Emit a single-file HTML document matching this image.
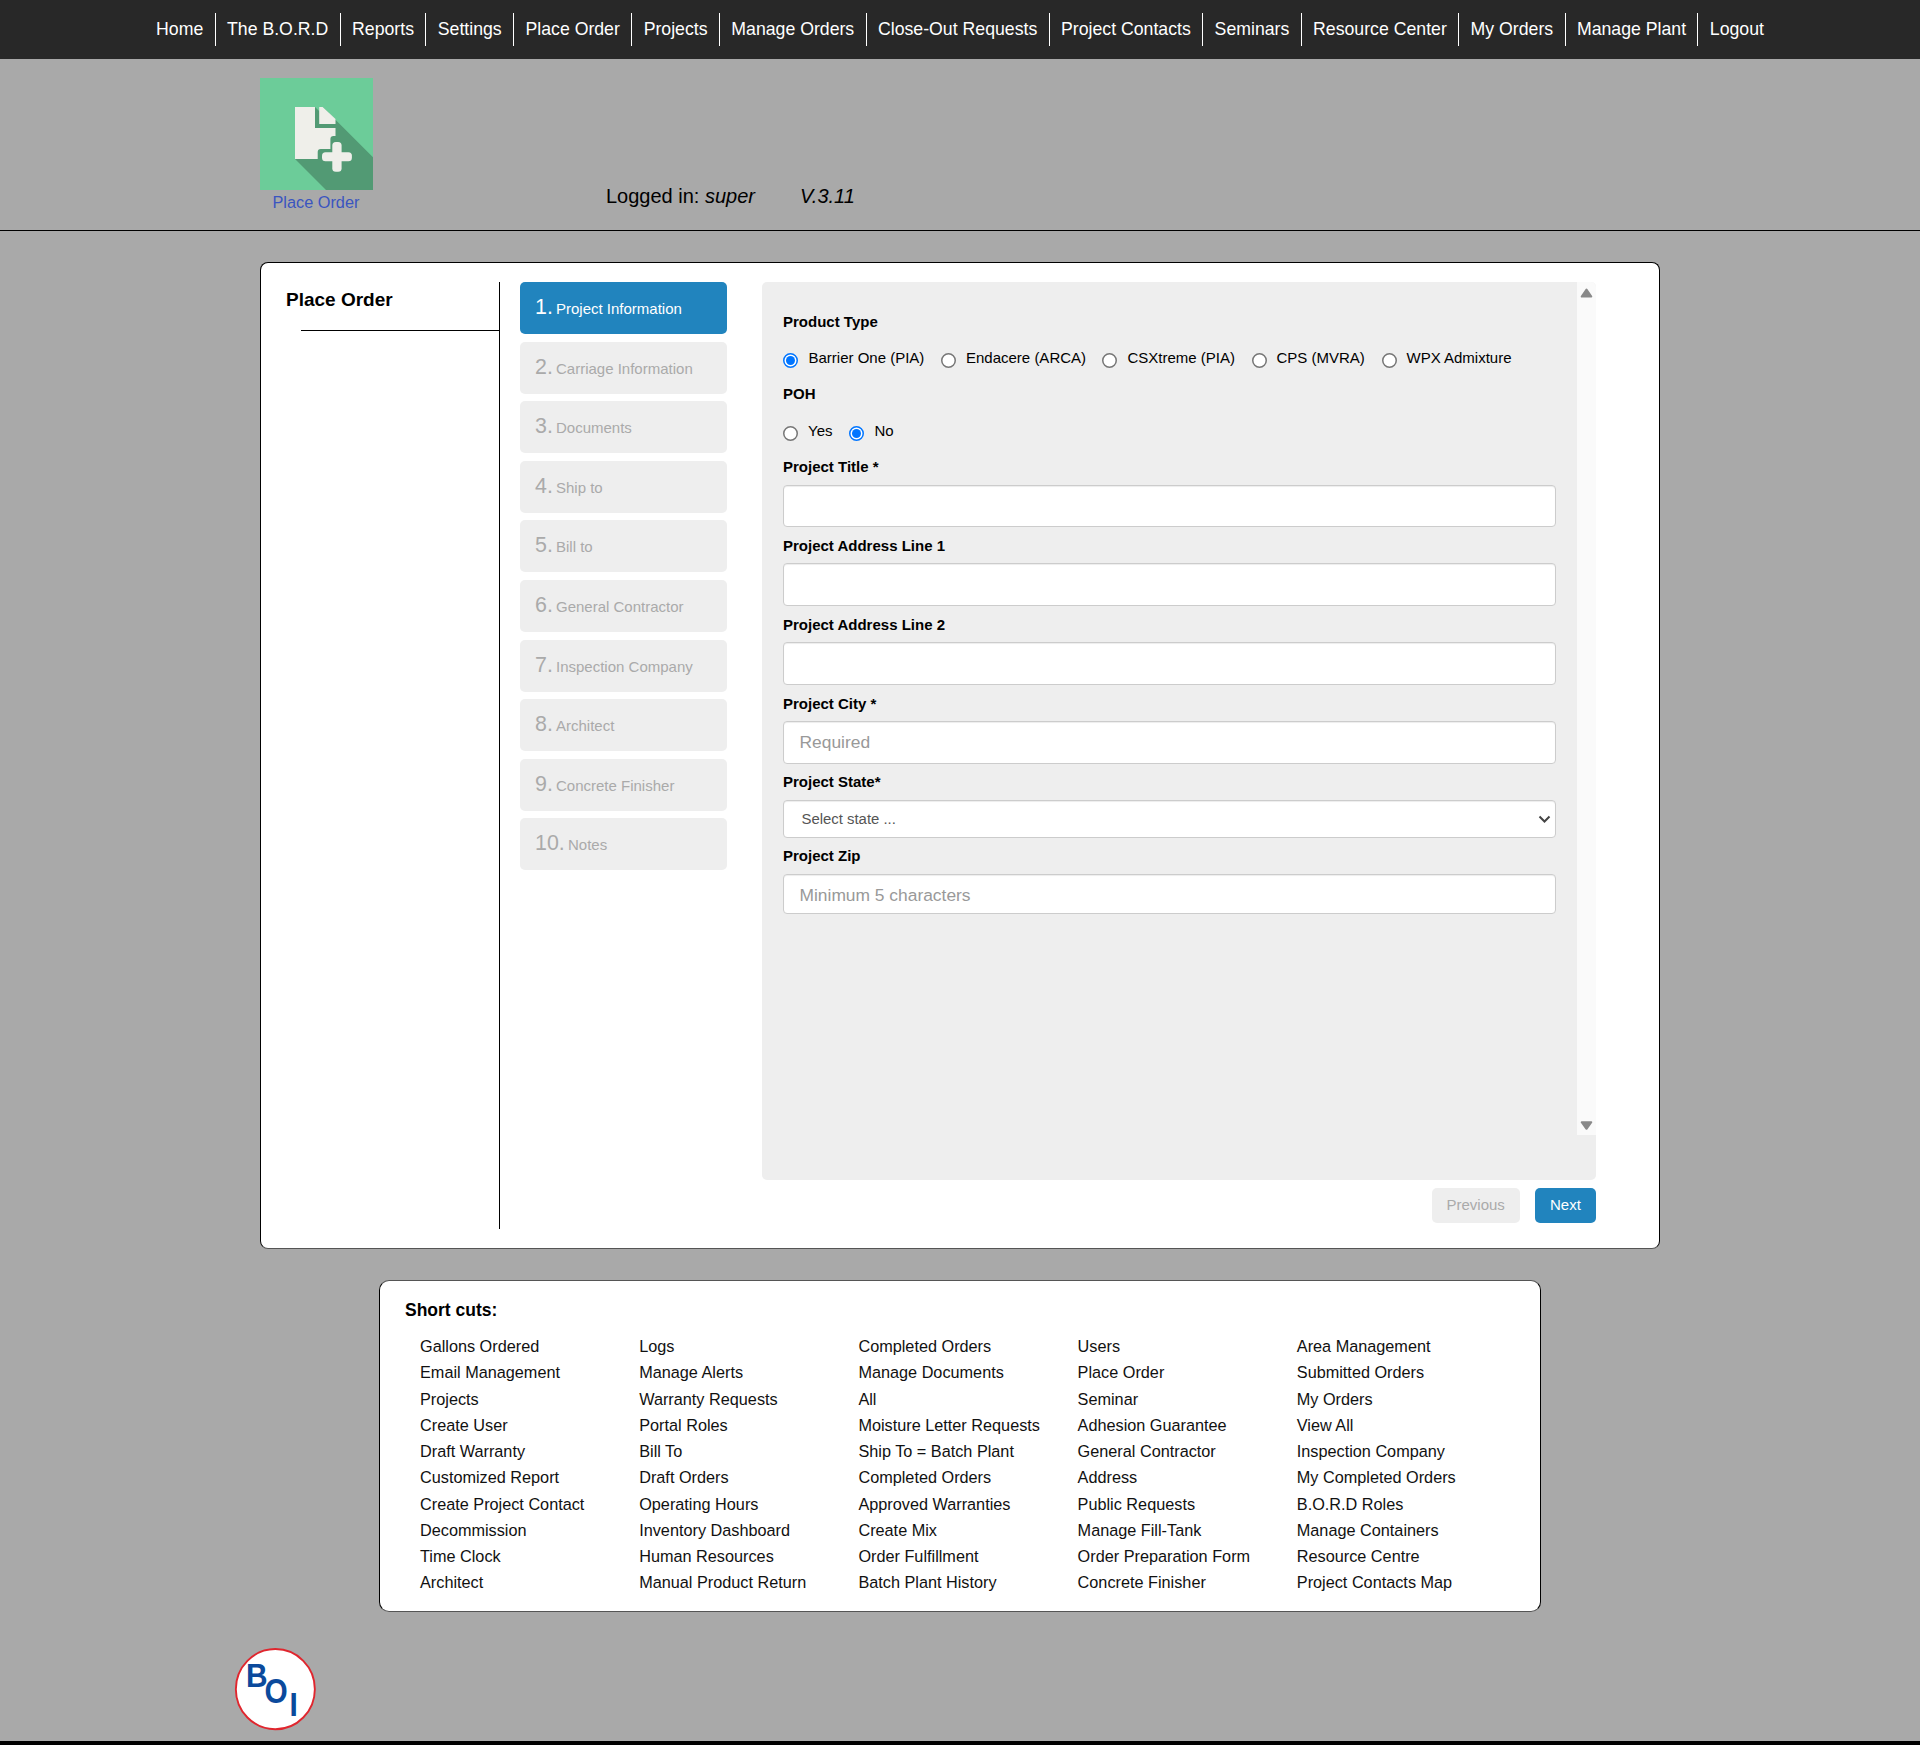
<!DOCTYPE html>
<html><head><meta charset="utf-8"><title>Place Order</title>
<style>
*{box-sizing:border-box}
html,body{margin:0;padding:0}
body{width:1920px;height:1745px;background:#a9a9a9;font-family:"Liberation Sans",sans-serif;position:relative;overflow:hidden;color:#000}
.abs{position:absolute;white-space:nowrap;line-height:normal}
#nav{position:absolute;left:0;top:0;width:1920px;height:59px;background:#282828}
#nav ul{list-style:none;margin:0;padding:0;position:absolute;left:0;right:0;top:13px;text-align:center;font-size:0;white-space:nowrap}
#nav li{display:inline-block;vertical-align:top;font-size:17.7px;color:#fff;line-height:33px;height:33px;padding:0 11.4px;border-left:1px solid #fff}
#nav li:first-child{border-left:none}
.step{position:absolute;left:520px;width:207px;height:52px;border-radius:5px;background:#eee}
.step.cur{background:#2184be}
.inp{position:absolute;left:783px;width:773px;background:#fff;border:1px solid #ccc;border-radius:4px;box-shadow:inset 0 1px 1px rgba(0,0,0,.075)}
.rad{position:absolute}
.sc{color:#111}
</style></head><body>
<div id="nav"><ul><li>Home</li><li>The B.O.R.D</li><li>Reports</li><li>Settings</li><li>Place Order</li><li>Projects</li><li>Manage Orders</li><li>Close-Out Requests</li><li>Project Contacts</li><li>Seminars</li><li>Resource Center</li><li>My Orders</li><li>Manage Plant</li><li>Logout</li></ul></div>
<svg class="abs" style="left:260px;top:78px" width="113" height="112" viewBox="260 78 113 112">
<rect x="260" y="78" width="113" height="112" fill="#6ccc99"/>
<polygon points="315,107 319.6,111.6 319.6,107 322.7,107 373,157.3 373,190 326,190 295,159" fill="#529a74"/>
<path d="M295,107 H315 V128 H335.5 V136 H333.5 Q330.4,136 330.4,139 V149 H320.7 Q317.7,149 317.7,152 V159 H295 Z" fill="#efefea"/>
<polygon points="319.2,107 322.7,107 335.5,118.9 335.5,124.1 319.2,124.1" fill="#efefea"/>
<rect x="332.3" y="142.1" width="9.3" height="29.7" rx="3.5" fill="#efefea"/>
<rect x="322" y="152.2" width="29.9" height="9" rx="3.5" fill="#efefea"/>
</svg>
<div class="abs" style="left:272.5px;top:193px;font-size:16.3px;color:#3a55c0">Place Order</div>
<div class="abs" style="left:606px;top:185px;font-size:20px;">Logged in: <i>super</i></div>
<div class="abs" style="left:800px;top:185px;font-size:20px;"><i>V.3.11</i></div>
<div class="abs" style="left:0;top:230px;width:1920px;height:1px;background:#000"></div>
<div class="abs" style="left:260px;top:262px;width:1400px;height:987px;background:#fff;border:1px solid #000;border-bottom-color:#555;border-radius:8px"></div>
<div class="abs" style="left:286px;top:289px;font-size:19px;font-weight:bold">Place Order</div>
<div class="abs" style="left:301px;top:330px;width:198px;height:1px;background:#000"></div>
<div class="abs" style="left:499px;top:282px;width:1px;height:947px;background:#000"></div>
<div class="step cur" style="top:282.0px"></div>
<div class="abs" style="left:535px;top:295px;font-size:21.4px;color:#fff">1.</div>
<div class="abs" style="left:556px;top:300px;font-size:15px;color:#fff">Project Information</div>
<div class="step" style="top:341.6px"></div>
<div class="abs" style="left:535px;top:355px;font-size:21.4px;color:#aaa">2.</div>
<div class="abs" style="left:556px;top:360px;font-size:15px;color:#aaa">Carriage Information</div>
<div class="step" style="top:401.2px"></div>
<div class="abs" style="left:535px;top:414px;font-size:21.4px;color:#aaa">3.</div>
<div class="abs" style="left:556px;top:419px;font-size:15px;color:#aaa">Documents</div>
<div class="step" style="top:460.8px"></div>
<div class="abs" style="left:535px;top:474px;font-size:21.4px;color:#aaa">4.</div>
<div class="abs" style="left:556px;top:479px;font-size:15px;color:#aaa">Ship to</div>
<div class="step" style="top:520.4px"></div>
<div class="abs" style="left:535px;top:533px;font-size:21.4px;color:#aaa">5.</div>
<div class="abs" style="left:556px;top:538px;font-size:15px;color:#aaa">Bill to</div>
<div class="step" style="top:580.0px"></div>
<div class="abs" style="left:535px;top:593px;font-size:21.4px;color:#aaa">6.</div>
<div class="abs" style="left:556px;top:598px;font-size:15px;color:#aaa">General Contractor</div>
<div class="step" style="top:639.6px"></div>
<div class="abs" style="left:535px;top:653px;font-size:21.4px;color:#aaa">7.</div>
<div class="abs" style="left:556px;top:658px;font-size:15px;color:#aaa">Inspection Company</div>
<div class="step" style="top:699.2px"></div>
<div class="abs" style="left:535px;top:712px;font-size:21.4px;color:#aaa">8.</div>
<div class="abs" style="left:556px;top:717px;font-size:15px;color:#aaa">Architect</div>
<div class="step" style="top:758.8px"></div>
<div class="abs" style="left:535px;top:772px;font-size:21.4px;color:#aaa">9.</div>
<div class="abs" style="left:556px;top:777px;font-size:15px;color:#aaa">Concrete Finisher</div>
<div class="step" style="top:818.4px"></div>
<div class="abs" style="left:535px;top:831px;font-size:21.4px;color:#aaa">10.</div>
<div class="abs" style="left:568px;top:836px;font-size:15px;color:#aaa">Notes</div>
<div class="abs" style="left:762px;top:282px;width:834px;height:898px;background:#eee;border-radius:5px"></div>
<div class="abs" style="left:1577px;top:282px;width:19px;height:853px;background:#fafafa;border-top-right-radius:5px"></div>
<svg class="abs" style="left:1577px;top:282px" width="19" height="853"><polygon points="4.7,14.6 14.3,14.6 9.5,7.6" fill="#898989" stroke="#898989" stroke-width="2" stroke-linejoin="round"/><polygon points="4.7,840.2 14.3,840.2 9.5,846.8" fill="#898989" stroke="#898989" stroke-width="2" stroke-linejoin="round"/></svg>
<div class="abs" style="left:783px;top:313px;font-size:15px;font-weight:bold">Product Type</div>
<svg class="abs" style="left:783px;top:353.0px" width="15" height="15"><circle cx="7.5" cy="7.5" r="6.75" fill="#fff" stroke="#0075ff" stroke-width="1.5"/><circle cx="7.5" cy="7.5" r="4.5" fill="#0075ff"/></svg>
<div class="abs" style="left:808.5px;top:349px;font-size:15px;">Barrier One (PIA)</div>
<svg class="abs" style="left:941px;top:353.0px" width="15" height="15"><circle cx="7.5" cy="7.5" r="6.75" fill="#fff" stroke="#767676" stroke-width="1.5"/></svg>
<div class="abs" style="left:966px;top:349px;font-size:15px;">Endacere (ARCA)</div>
<svg class="abs" style="left:1102px;top:353.0px" width="15" height="15"><circle cx="7.5" cy="7.5" r="6.75" fill="#fff" stroke="#767676" stroke-width="1.5"/></svg>
<div class="abs" style="left:1127.5px;top:349px;font-size:15px;">CSXtreme (PIA)</div>
<svg class="abs" style="left:1251.5px;top:353.0px" width="15" height="15"><circle cx="7.5" cy="7.5" r="6.75" fill="#fff" stroke="#767676" stroke-width="1.5"/></svg>
<div class="abs" style="left:1276.5px;top:349px;font-size:15px;">CPS (MVRA)</div>
<svg class="abs" style="left:1381.5px;top:353.0px" width="15" height="15"><circle cx="7.5" cy="7.5" r="6.75" fill="#fff" stroke="#767676" stroke-width="1.5"/></svg>
<div class="abs" style="left:1406.5px;top:349px;font-size:15px;">WPX Admixture</div>
<div class="abs" style="left:783px;top:385px;font-size:15px;font-weight:bold">POH</div>
<svg class="abs" style="left:783px;top:426.0px" width="15" height="15"><circle cx="7.5" cy="7.5" r="6.75" fill="#fff" stroke="#767676" stroke-width="1.5"/></svg>
<div class="abs" style="left:808px;top:422px;font-size:15px;">Yes</div>
<svg class="abs" style="left:849px;top:426.0px" width="15" height="15"><circle cx="7.5" cy="7.5" r="6.75" fill="#fff" stroke="#0075ff" stroke-width="1.5"/><circle cx="7.5" cy="7.5" r="4.5" fill="#0075ff"/></svg>
<div class="abs" style="left:874.5px;top:422px;font-size:15px;">No</div>
<div class="abs" style="left:783px;top:458px;font-size:15px;font-weight:bold">Project Title *</div>
<div class="inp" style="top:485px;height:42px"></div>
<div class="abs" style="left:783px;top:537px;font-size:15px;font-weight:bold">Project Address Line 1</div>
<div class="inp" style="top:563px;height:43px"></div>
<div class="abs" style="left:783px;top:616px;font-size:15px;font-weight:bold">Project Address Line 2</div>
<div class="inp" style="top:642px;height:43px"></div>
<div class="abs" style="left:783px;top:695px;font-size:15px;font-weight:bold">Project City *</div>
<div class="inp" style="top:721px;height:43px"></div>
<div class="abs" style="left:799.5px;top:732px;font-size:17.4px;color:#999">Required</div>
<div class="abs" style="left:783px;top:773px;font-size:15px;font-weight:bold">Project State*</div>
<div class="inp" style="top:800px;height:38px"></div>
<div class="abs" style="left:801.5px;top:811px;font-size:14.9px;color:#555">Select state ...</div>
<svg class="abs" style="left:1538px;top:813px" width="14" height="14"><polyline points="1.5,3.5 6.5,8.5 11.5,3.5" fill="none" stroke="#444" stroke-width="2"/></svg>
<div class="abs" style="left:783px;top:847px;font-size:15px;font-weight:bold">Project Zip</div>
<div class="inp" style="top:874px;height:40px"></div>
<div class="abs" style="left:799.5px;top:885px;font-size:17.4px;color:#999">Minimum 5 characters</div>
<div class="abs" style="left:1432px;top:1188px;width:88px;height:35px;background:#eee;border-radius:5px"></div>
<div class="abs" style="left:1446.5px;top:1196px;font-size:15px;color:#aaa">Previous</div>
<div class="abs" style="left:1535px;top:1188px;width:61px;height:35px;background:#2184be;border-radius:5px"></div>
<div class="abs" style="left:1550px;top:1196px;font-size:15px;color:#fff">Next</div>
<div class="abs" style="left:379px;top:1280px;width:1162px;height:332px;background:#fff;border:1px solid #000;border-top-color:#555;border-bottom-color:#555;border-radius:10px"></div>
<div class="abs" style="left:405px;top:1300px;font-size:17.5px;font-weight:bold">Short cuts:</div>
<div class="abs" style="left:420.0px;top:1337px;font-size:16.25px;color:#111">Gallons Ordered</div>
<div class="abs" style="left:420.0px;top:1363px;font-size:16.25px;color:#111">Email Management</div>
<div class="abs" style="left:420.0px;top:1390px;font-size:16.25px;color:#111">Projects</div>
<div class="abs" style="left:420.0px;top:1416px;font-size:16.25px;color:#111">Create User</div>
<div class="abs" style="left:420.0px;top:1442px;font-size:16.25px;color:#111">Draft Warranty</div>
<div class="abs" style="left:420.0px;top:1468px;font-size:16.25px;color:#111">Customized Report</div>
<div class="abs" style="left:420.0px;top:1495px;font-size:16.25px;color:#111">Create Project Contact</div>
<div class="abs" style="left:420.0px;top:1521px;font-size:16.25px;color:#111">Decommission</div>
<div class="abs" style="left:420.0px;top:1547px;font-size:16.25px;color:#111">Time Clock</div>
<div class="abs" style="left:420.0px;top:1573px;font-size:16.25px;color:#111">Architect</div>
<div class="abs" style="left:639.2px;top:1337px;font-size:16.25px;color:#111">Logs</div>
<div class="abs" style="left:639.2px;top:1363px;font-size:16.25px;color:#111">Manage Alerts</div>
<div class="abs" style="left:639.2px;top:1390px;font-size:16.25px;color:#111">Warranty Requests</div>
<div class="abs" style="left:639.2px;top:1416px;font-size:16.25px;color:#111">Portal Roles</div>
<div class="abs" style="left:639.2px;top:1442px;font-size:16.25px;color:#111">Bill To</div>
<div class="abs" style="left:639.2px;top:1468px;font-size:16.25px;color:#111">Draft Orders</div>
<div class="abs" style="left:639.2px;top:1495px;font-size:16.25px;color:#111">Operating Hours</div>
<div class="abs" style="left:639.2px;top:1521px;font-size:16.25px;color:#111">Inventory Dashboard</div>
<div class="abs" style="left:639.2px;top:1547px;font-size:16.25px;color:#111">Human Resources</div>
<div class="abs" style="left:639.2px;top:1573px;font-size:16.25px;color:#111">Manual Product Return</div>
<div class="abs" style="left:858.4px;top:1337px;font-size:16.25px;color:#111">Completed Orders</div>
<div class="abs" style="left:858.4px;top:1363px;font-size:16.25px;color:#111">Manage Documents</div>
<div class="abs" style="left:858.4px;top:1390px;font-size:16.25px;color:#111">All</div>
<div class="abs" style="left:858.4px;top:1416px;font-size:16.25px;color:#111">Moisture Letter Requests</div>
<div class="abs" style="left:858.4px;top:1442px;font-size:16.25px;color:#111">Ship To = Batch Plant</div>
<div class="abs" style="left:858.4px;top:1468px;font-size:16.25px;color:#111">Completed Orders</div>
<div class="abs" style="left:858.4px;top:1495px;font-size:16.25px;color:#111">Approved Warranties</div>
<div class="abs" style="left:858.4px;top:1521px;font-size:16.25px;color:#111">Create Mix</div>
<div class="abs" style="left:858.4px;top:1547px;font-size:16.25px;color:#111">Order Fulfillment</div>
<div class="abs" style="left:858.4px;top:1573px;font-size:16.25px;color:#111">Batch Plant History</div>
<div class="abs" style="left:1077.6px;top:1337px;font-size:16.25px;color:#111">Users</div>
<div class="abs" style="left:1077.6px;top:1363px;font-size:16.25px;color:#111">Place Order</div>
<div class="abs" style="left:1077.6px;top:1390px;font-size:16.25px;color:#111">Seminar</div>
<div class="abs" style="left:1077.6px;top:1416px;font-size:16.25px;color:#111">Adhesion Guarantee</div>
<div class="abs" style="left:1077.6px;top:1442px;font-size:16.25px;color:#111">General Contractor</div>
<div class="abs" style="left:1077.6px;top:1468px;font-size:16.25px;color:#111">Address</div>
<div class="abs" style="left:1077.6px;top:1495px;font-size:16.25px;color:#111">Public Requests</div>
<div class="abs" style="left:1077.6px;top:1521px;font-size:16.25px;color:#111">Manage Fill-Tank</div>
<div class="abs" style="left:1077.6px;top:1547px;font-size:16.25px;color:#111">Order Preparation Form</div>
<div class="abs" style="left:1077.6px;top:1573px;font-size:16.25px;color:#111">Concrete Finisher</div>
<div class="abs" style="left:1296.8px;top:1337px;font-size:16.25px;color:#111">Area Management</div>
<div class="abs" style="left:1296.8px;top:1363px;font-size:16.25px;color:#111">Submitted Orders</div>
<div class="abs" style="left:1296.8px;top:1390px;font-size:16.25px;color:#111">My Orders</div>
<div class="abs" style="left:1296.8px;top:1416px;font-size:16.25px;color:#111">View All</div>
<div class="abs" style="left:1296.8px;top:1442px;font-size:16.25px;color:#111">Inspection Company</div>
<div class="abs" style="left:1296.8px;top:1468px;font-size:16.25px;color:#111">My Completed Orders</div>
<div class="abs" style="left:1296.8px;top:1495px;font-size:16.25px;color:#111">B.O.R.D Roles</div>
<div class="abs" style="left:1296.8px;top:1521px;font-size:16.25px;color:#111">Manage Containers</div>
<div class="abs" style="left:1296.8px;top:1547px;font-size:16.25px;color:#111">Resource Centre</div>
<div class="abs" style="left:1296.8px;top:1573px;font-size:16.25px;color:#111">Project Contacts Map</div>
<svg class="abs" style="left:234px;top:1647px" width="84" height="84" viewBox="234 1647 84 84">
<ellipse cx="275.35" cy="1689.15" rx="39.5" ry="40.1" fill="#fff" stroke="#e0262e" stroke-width="1.9"/>
<text transform="translate(246.1,1686.7) scale(0.89,1)" font-family="Liberation Sans" font-weight="bold" font-size="33.5" fill="#0b4a9c">B</text>
<text transform="translate(264.6,1702.6) scale(0.89,1.04)" font-family="Liberation Sans" font-weight="bold" font-size="33.5" fill="#0b4a9c">O</text>
<text transform="translate(289.6,1715.8) scale(0.89,1)" font-family="Liberation Sans" font-weight="bold" font-size="33.5" fill="#0b4a9c">I</text>
</svg>
<div class="abs" style="left:0;top:1741px;width:1920px;height:4px;background:#000"></div>
</body></html>
